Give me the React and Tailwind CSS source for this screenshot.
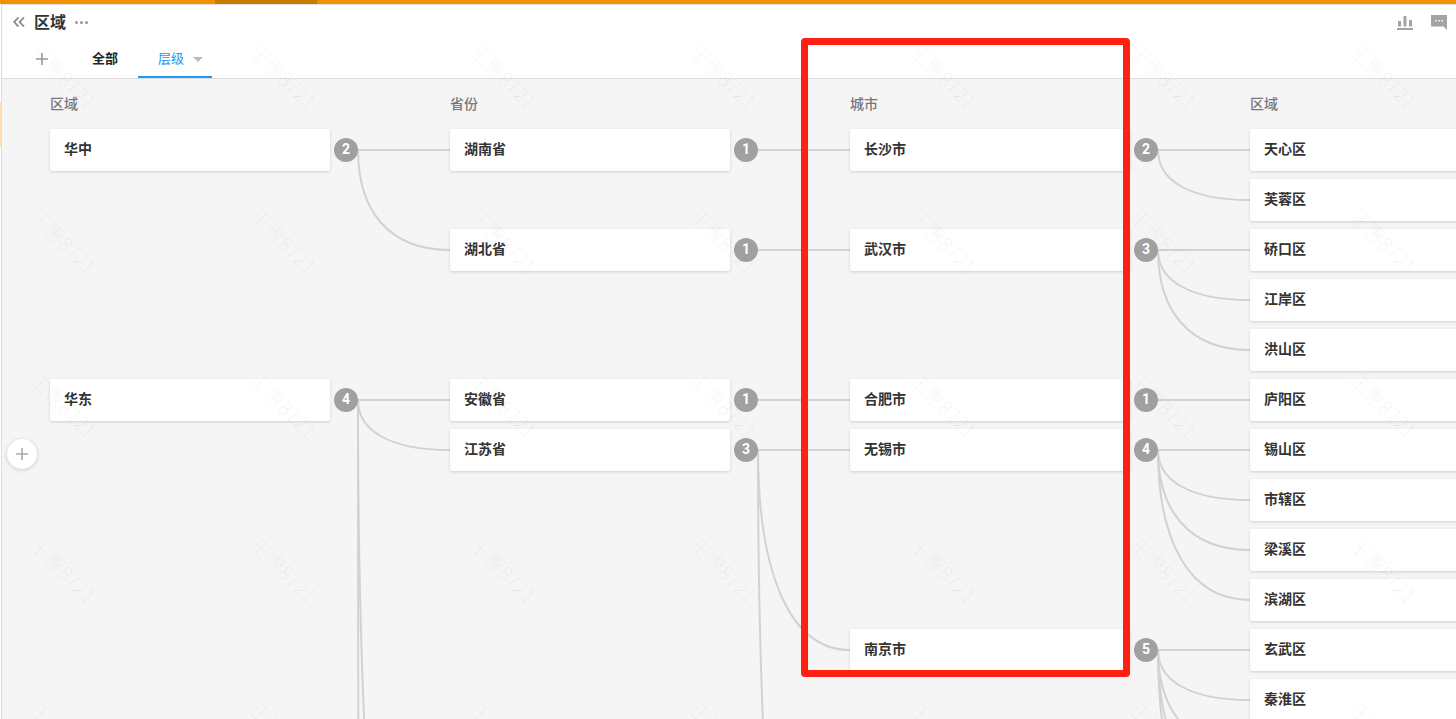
import React from "react";

const FONT = "font-['Roboto','Noto_Sans_CJK_SC',sans-serif]";

const columns = [
  {
    title: "区域",
    items: [
      { name: "华中", span: 5, count: 2 },
      { name: "华东", span: 10, count: 4 },
    ],
  },
  {
    title: "省份",
    items: [
      { name: "湖南省", span: 2, count: 1 },
      { name: "湖北省", span: 3, count: 1 },
      { name: "安徽省", span: 1, count: 1 },
      { name: "江苏省", span: 9, count: 3 },
    ],
  },
  {
    title: "城市",
    items: [
      { name: "长沙市", span: 2, count: 2 },
      { name: "武汉市", span: 3, count: 3 },
      { name: "合肥市", span: 1, count: 1 },
      { name: "无锡市", span: 4, count: 4 },
      { name: "南京市", span: 5, count: 5 },
    ],
  },
  {
    title: "区域",
    items: ["天心区", "芙蓉区", "硚口区", "江岸区", "洪山区", "庐阳区", "锡山区", "市辖区", "梁溪区", "滨湖区", "玄武区", "秦淮区"].map(
      (name) => ({ name, span: 1 })
    ),
  },
];

const links = [
  [358, 150, [150, 250]],
  [358, 400, [400, 450, 1150, 3400]],
  [758, 150, [150]],
  [758, 250, [250]],
  [758, 400, [400]],
  [758, 450, [450, 650, 1150]],
  [1158, 150, [150, 200]],
  [1158, 250, [250, 300, 350]],
  [1158, 400, [400]],
  [1158, 450, [450, 500, 550, 600]],
  [1158, 650, [650, 700, 750, 800, 850]],
];

function linkPath(x, y, ty) {
  const dx = 92;
  const dy = ty - y;
  if (dy === 0) return `M${x} ${y}H${x + dx}`;
  return `M${x} ${y}C${x} ${y + dy * 0.6} ${x + dx * 0.33} ${ty} ${x + dx} ${ty}`;
}

function Card({ name, span, count }) {
  const heights = { 1: "h-[50px]", 2: "h-[100px]", 3: "h-[150px]", 4: "h-[200px]", 5: "h-[250px]", 9: "h-[450px]", 10: "h-[500px]" };
  return (
    <div className={`${heights[span]} flex items-start gap-1 shrink-0`}>
      <div className="w-[280px] h-[42px] shrink-0 bg-white rounded-[2px] shadow-[0_1px_3px_rgba(0,0,0,0.16)] pl-[14px] flex items-center text-[14px] leading-[40px] font-bold text-[#333] pb-[2px]">
        {name}
      </div>
      {count ? (
        <div className="mt-[9px] w-6 h-6 rounded-full bg-[#a0a0a0] text-white text-[14px] font-bold flex items-center justify-center shrink-0 pb-[1px]">
          {count}
        </div>
      ) : null}
    </div>
  );
}

function Plus({ className }) {
  return (
    <svg viewBox="0 0 12 12" className={className} fill="none" stroke="currentColor" strokeWidth="1.6">
      <path d="M6 0V12M0 6H12" />
    </svg>
  );
}

const marks = Array.from({ length: 35 });

export default function App() {
  return (
    <div className={`relative w-[1456px] h-[719px] overflow-hidden flex flex-col bg-white ${FONT}`}>
      <div className="h-1 flex shrink-0 bg-[#f09100]">
        <div className="w-[215px]" />
        <div className="w-[102px] bg-[#c77c00]" />
      </div>

      <div className="flex-1 min-h-0 flex flex-col ml-px border-l border-[#dcdcdc]">
        <header className="shrink-0 bg-white">
          <div className="h-9 flex items-center pl-[11px] pr-[9px] shadow-[inset_0_1px_0_#e0e0e0]">
            <svg viewBox="0 0 12 10" className="w-3 h-[10px] text-[#888]" fill="none" stroke="currentColor" strokeWidth="1.8">
              <path d="M5.5 0.5L1.2 5L5.5 9.5M11 0.5L6.7 5L11 9.5" />
            </svg>
            <span className="ml-[9px] pt-[2px] text-[16px] font-bold text-[#333] leading-none">区域</span>
            <span className="ml-[9px] flex gap-[2px]">
              <i className="w-[3px] h-[3px] rounded-full bg-[#999]" />
              <i className="w-[3px] h-[3px] rounded-full bg-[#999]" />
              <i className="w-[3px] h-[3px] rounded-full bg-[#999]" />
            </span>
            <span className="ml-auto flex items-center gap-[18px]">
              <svg viewBox="0 0 16 15" className="w-4 h-[15px] text-[#a3a3a3]" fill="currentColor">
                <path d="M1 6H4V11.5H1ZM6.5 1H9.5V11.5H6.5ZM12 5H15V11.5H12ZM0 13H16V15H0Z" />
              </svg>
              <svg viewBox="0 0 16 15" className="w-4 h-[15px] text-[#a3a3a3]" fill="currentColor">
                <path fillRule="evenodd" d="M0 0H16V15L12.5 11.5H0ZM4 5V6.5H5.5V5ZM7.2 5V6.5H8.8V5ZM10.5 5V6.5H12V5Z" />
              </svg>
            </span>
          </div>
          <div className="h-[39px] flex border-b border-[#dedede] text-[13px] pl-[34px]">
            <div className="flex items-center w-[56px] text-[#999]">
              <Plus className="w-3 h-3" />
            </div>
            <div className="flex items-center font-bold text-[#222] w-[46px]">全部</div>
            <div className="w-[74px] h-[38px] pt-[2px] border-b-2 border-[#2196f3] flex items-center pl-5 text-[#2196f3]">
              层级
              <span className="ml-[9px] w-0 h-0 border-x-[5px] border-x-transparent border-t-[5px] border-t-[#bbb]" />
            </div>
          </div>
        </header>

        <main className="relative flex-1 min-h-0 overflow-hidden bg-[#f5f5f5] flex gap-[120px] pl-[48px]">
          <svg viewBox="2 79 1454 640" className="absolute top-0 left-0 w-[1454px] h-[640px]" fill="none" stroke="#d2d2d2" strokeWidth="2">
            {links.flatMap(([x, y, targets]) =>
              targets.map((t) => <path key={`${x}-${y}-${t}`} d={linkPath(x, y, t)} />)
            )}
          </svg>
          {columns.map((col, i) => (
            <section key={i} className="relative w-[280px] shrink-0">
              <h3 className="h-[50px] flex items-center text-[14px] font-medium text-[#777]">{col.title}</h3>
              <div className="flex flex-col">
                {col.items.map((it) => (
                  <Card key={it.name} {...it} />
                ))}
              </div>
            </section>
          ))}
          <button className="absolute left-[5px] top-[360px] w-[30px] h-[30px] rounded-full bg-white shadow-[0_1px_4px_rgba(0,0,0,0.18)] flex items-center justify-center text-[#aaa]">
            <Plus className="w-3 h-3" />
          </button>
        </main>
      </div>

      <div className="absolute left-0 top-[102px] w-px h-[45px] bg-[#ffe0b5]" />

      <div className="absolute top-[-6px] left-[-47px] grid grid-cols-[repeat(7,220px)] auto-rows-[164.6px] pointer-events-none">
        {marks.map((_, i) => (
          <div key={i} className="flex items-center justify-center">
            <span className="rotate-45 text-[20px] font-light leading-none whitespace-nowrap text-black/[0.06] font-['Noto_Sans_CJK_SC','Open_Sans',sans-serif]">王惠8721</span>
          </div>
        ))}
      </div>

      <div className="absolute left-[801px] top-[38px] w-[329px] h-[639px] border-[7px] border-[#ff2013] rounded-[4px] pointer-events-none" />
    </div>
  );
}
